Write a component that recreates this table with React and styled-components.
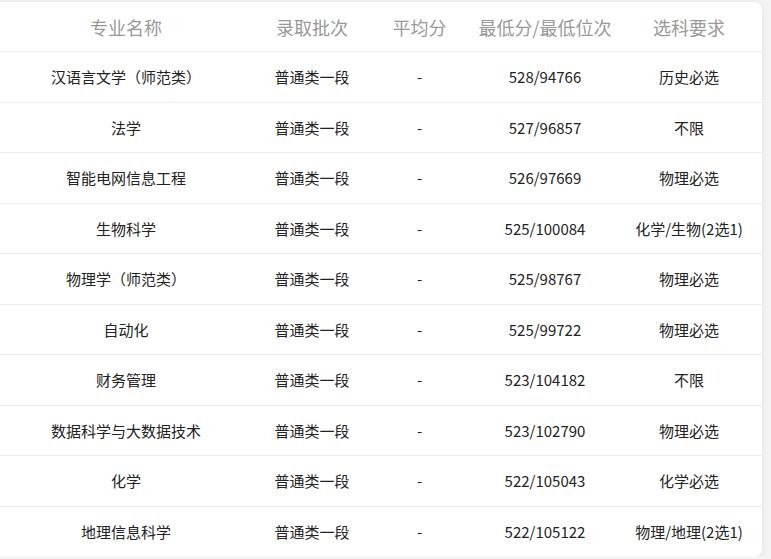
import styled, { createGlobalStyle } from 'styled-components'

const GlobalStyle = createGlobalStyle`
  html, body {
    margin: 0;
    padding: 0;
    background: #f4f4f4;
  }
  body {
    font-family: "Noto Sans CJK SC", "Noto Sans", sans-serif;
    overflow: hidden;
  }
`

const rows = [
  ['汉语言文学（师范类）', '普通类一段', '-', '528/94766', '历史必选'],
  ['法学', '普通类一段', '-', '527/96857', '不限'],
  ['智能电网信息工程', '普通类一段', '-', '526/97669', '物理必选'],
  ['生物科学', '普通类一段', '-', '525/100084', '化学/生物(2选1)'],
  ['物理学（师范类）', '普通类一段', '-', '525/98767', '物理必选'],
  ['自动化', '普通类一段', '-', '525/99722', '物理必选'],
  ['财务管理', '普通类一段', '-', '523/104182', '不限'],
  ['数据科学与大数据技术', '普通类一段', '-', '523/102790', '物理必选'],
  ['化学', '普通类一段', '-', '522/105043', '化学必选'],
  ['地理信息科学', '普通类一段', '-', '522/105122', '物理/地理(2选1)'],
]

const headers = ['专业名称', '录取批次', '平均分', '最低分/最低位次', '选科要求']

export default function App() {
  return (
    <>
      <GlobalStyle />
      <Card>
        <Row header>
          {headers.map(h => <Cell key={h} header>{h}</Cell>)}
        </Row>
        {rows.map((r, i) => (
          <Row key={i} last={i === rows.length - 1}>
            {r.map((c, j) => <Cell key={j}>{c}</Cell>)}
          </Row>
        ))}
      </Card>
    </>
  )
}

const Card = styled.div`
  width: 769px;
  margin: 2px 0 0 -7px;
  background: #fff;
  border-radius: 0 8px 8px 0;
  box-shadow: 0 1px 8px rgba(0, 0, 0, 0.08);
  overflow: hidden;
`

const Row = styled.div`
  display: grid;
  grid-template-columns: 266px 106px 109px 142px 146px;
  align-items: center;
  box-sizing: border-box;
  height: ${props => props.header ? '50px' : '50.5px'};
  border-bottom: ${props => props.last ? 'none' : '1px solid #ececec'};
`

const Cell = styled.div`
  text-align: center;
  white-space: nowrap;
  font-size: ${props => props.header ? '18px' : '15px'};
  color: ${props => props.header ? '#999' : '#222'};
`
